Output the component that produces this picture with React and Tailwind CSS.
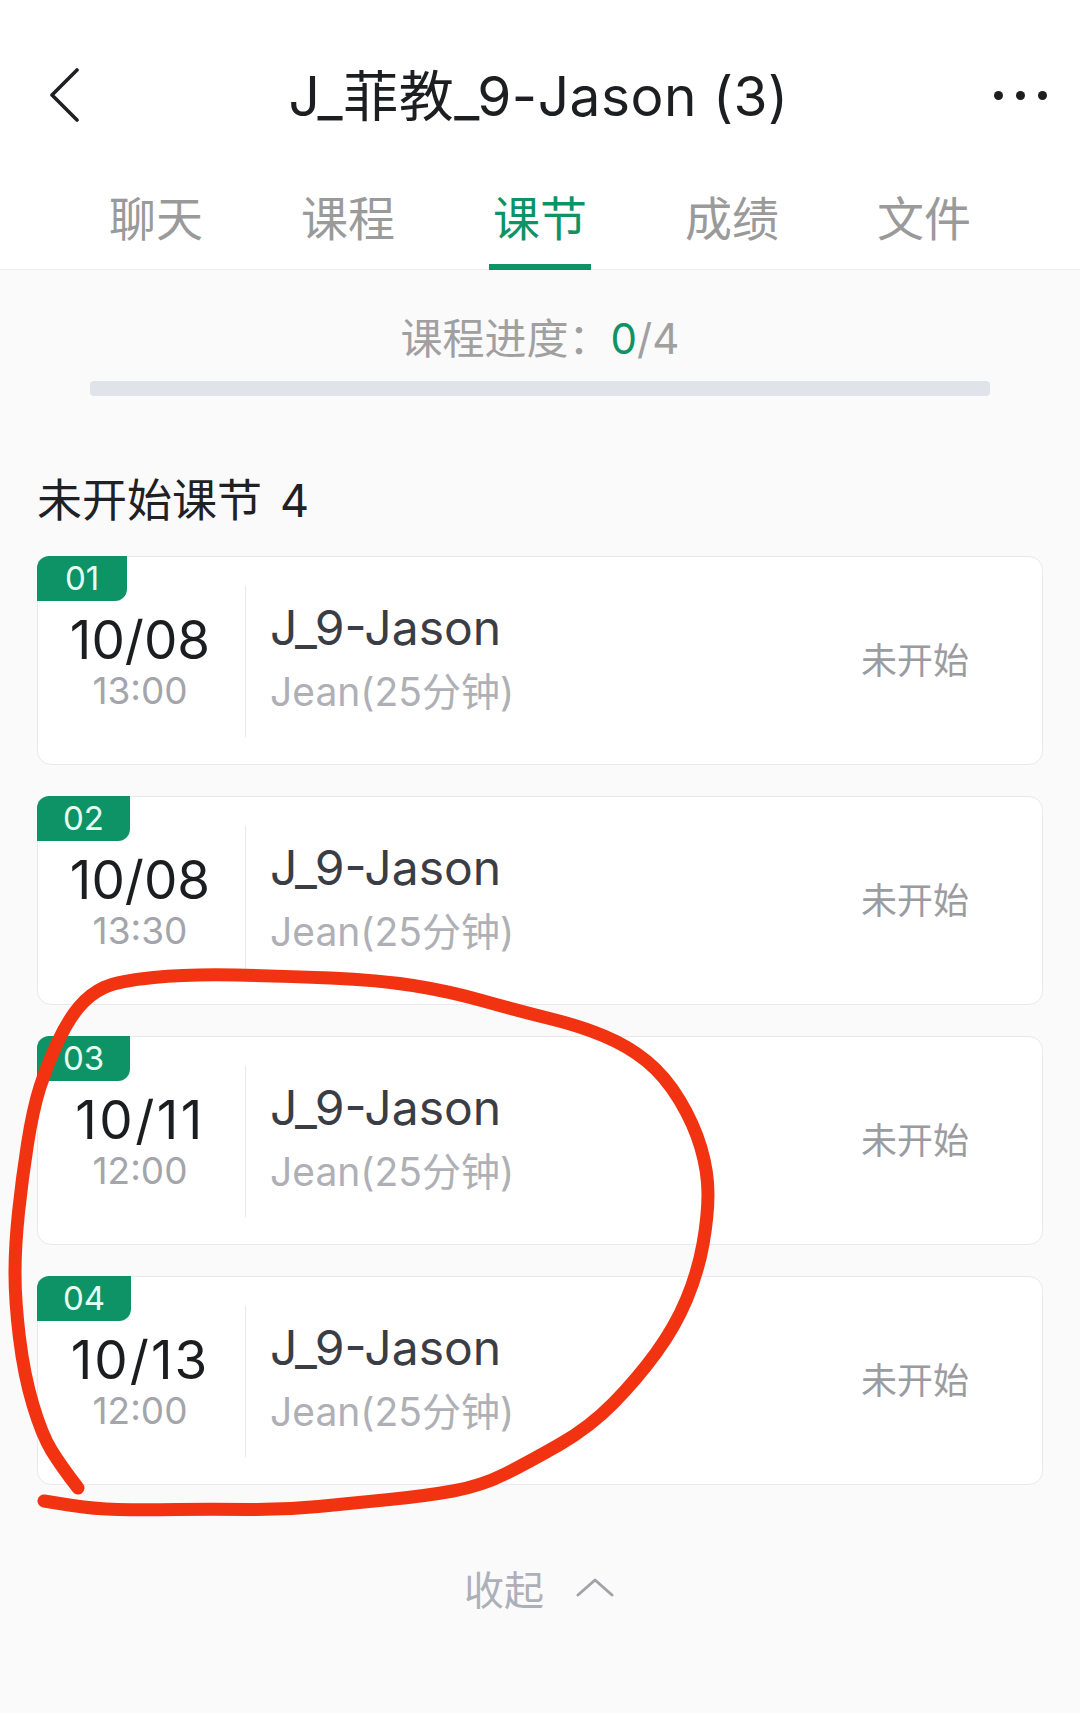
const font = { fontFamily: '"Inter","Noto Sans CJK SC",sans-serif' };

const tabs = ["聊天", "课程", "课节", "成绩", "文件"];
const lessons = [
  { no: "01", date: "10/08", time: "13:00", badge: "w-[90px]", track: "" },
  { no: "02", date: "10/08", time: "13:30", badge: "w-[93px]", track: "" },
  { no: "03", date: "10/11", time: "12:00", badge: "w-[93px]", track: "tracking-[2.5px]" },
  { no: "04", date: "10/13", time: "12:00", badge: "w-[94px]", track: "tracking-[2px]" },
];

const pts = [[78,1488],[61,1466],[42,1435],[24,1375],[15,1301],[15,1246],[22,1179],[33,1109],[47,1065],[68,1020],[90,994],[118,981],[189,974],[283,976],[378,980],[448,991],[519,1011],[580,1026],[628,1046],[665,1076],[694,1124],[708,1172],[708,1216],[698,1272],[675,1327],[637,1379],[590,1427],[529,1462],[481,1486],[425,1496],[354,1503],[283,1510],[212,1509],[142,1510],[94,1509],[44,1501]];

function smooth(p) {
  let d = `M${p[0][0]} ${p[0][1]}`;
  for (let i = 1; i < p.length - 1; i++) {
    const mx = (p[i][0] + p[i + 1][0]) / 2;
    const my = (p[i][1] + p[i + 1][1]) / 2;
    d += ` Q${p[i][0]} ${p[i][1]} ${mx} ${my}`;
  }
  const l = p[p.length - 1];
  return d + ` L${l[0]} ${l[1]}`;
}

function Card({ l }) {
  return (
    <div className="relative flex h-[209px] rounded-[14px] border border-[#e8e9ec] bg-white">
      <div className={`absolute -left-px -top-px flex h-[45px] items-center justify-center rounded-tl-[12px] rounded-br-[12px] bg-[#0e9367] text-[33px] font-normal text-[#e4fff4] ${l.badge}`}>
        {l.no}
      </div>
      <div className="flex w-[204px] flex-col items-center pt-[53px]">
        <div className={`text-[53px] leading-[60px] font-normal text-[#1c1d21] ${l.track}`}>{l.date}</div>
        <div className="mt-[-2px] text-[37px] leading-[46px] font-normal text-[#a3a5ab]">{l.time}</div>
      </div>
      <div className="ml-[3px] mt-[29px] h-[151px] w-px bg-[#e8e9ec]" />
      <div className="flex-1 pl-[24px] pt-[43px]">
        <div className="text-[48px] leading-[56px] font-normal text-[#3b3d45]">J_9-Jason</div>
        <div className="mt-[11px] text-[39px] leading-[50px] font-normal text-[#aeb0b6]">Jean(25分钟)</div>
      </div>
      <div className="flex items-center pr-[73px] text-[36px] font-normal text-[#9a9ca2]">未开始</div>
    </div>
  );
}

export default function App() {
  return (
    <div className="relative h-[1713px] w-[1080px] overflow-hidden bg-[#fafafa]" style={font}>
      <div className="bg-white">
        <div className="flex h-[190px] items-center justify-between pl-[49px] pr-[33px]">
          <svg width="30" height="54" viewBox="0 0 30 54" fill="none" stroke="#1f2024" strokeWidth="3.6" strokeLinecap="round" strokeLinejoin="round">
            <path d="M28 2 L3 27 L28 52" />
          </svg>
          <div className="ml-[4px] pt-[2px] text-[55px] leading-none font-normal tracking-[0.5px] text-[#1d1e22]">J_菲教_9-Jason (3)</div>
          <div className="flex items-center gap-[13px]">
            <span className="h-[9px] w-[9px] rounded-full bg-[#1d1e22]" />
            <span className="h-[9px] w-[9px] rounded-full bg-[#1d1e22]" />
            <span className="h-[9px] w-[9px] rounded-full bg-[#1d1e22]" />
          </div>
        </div>
        <div className="grid h-[80px] grid-cols-5 border-b border-[#eeeeee] px-[60px]">
          {tabs.map((t, i) => (
            <div key={t} className="relative flex items-start justify-center">
              <span className={`text-[47px] leading-[58px] font-normal ${i === 2 ? "text-[#0e9367]" : "text-[#9a9a9a]"}`}>{t}</span>
              {i === 2 && <span className="absolute -bottom-px left-[45px] h-[6px] w-[102px] bg-[#0e9367]" />}
            </div>
          ))}
        </div>
      </div>

      <div className="px-[37px]">
        <div className="mt-[44px] flex items-center justify-center text-[42px] leading-[50px] font-normal text-[#a0a0a0]">
          <span>课程进度：</span>
          <span className="text-[#0e9367]">0</span>
          <span>/4</span>
        </div>
        <div className="mx-[53px] mt-[17px] h-[15px] rounded-[4px] bg-[#e1e3eb]" />
        <div className="mt-[77px] flex items-center text-[45px] leading-[56px] font-normal text-[#202125]">
          <span>未开始课节</span>
          <span className="ml-[18px]">4</span>
        </div>
        <div className="mt-[27px] flex flex-col gap-[31px]">
          {lessons.map((l) => <Card key={l.no} l={l} />)}
        </div>
        <div className="mt-[81px] flex items-center justify-center pr-[2px]">
          <span className="text-[40px] leading-[50px] font-normal text-[#aeb0b8]">收起</span>
          <svg className="ml-[32px] mb-[8px]" width="38" height="20" viewBox="0 0 38 20" fill="none" stroke="#a2a3a8" strokeWidth="3" strokeLinecap="round" strokeLinejoin="round">
            <path d="M2 18 L19 3 L36 18" />
          </svg>
        </div>
      </div>

      <svg className="pointer-events-none absolute left-0 top-0" width="1080" height="1713" fill="none">
        <path d={smooth(pts)} stroke="#f13312" strokeWidth="13" strokeLinecap="round" strokeLinejoin="round" />
      </svg>
    </div>
  );
}
